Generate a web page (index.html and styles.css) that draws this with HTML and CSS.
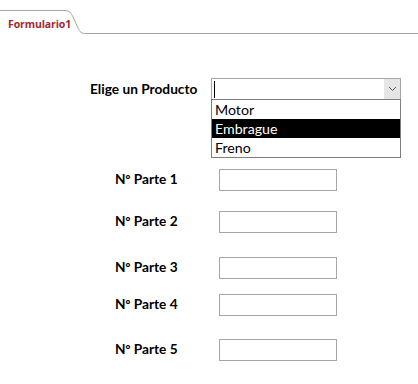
FILE: index.html
```html
<!DOCTYPE html>
<html lang="es">
<head>
    <meta charset="UTF-8">
    <title>Formulario1</title>
    <link rel="stylesheet" href="styles.css">
</head>
<body>
    <div class="tabbar">
        <svg class="tab-line" width="418" height="34" viewBox="0 0 418 34">
            <path d="M0 10.5 H64 C70 10.5 71 13 73 17 L78 28 C80 32 81 33.5 86 33.5 H418" fill="none" stroke="#a3a3a3" stroke-width="1"/>
        </svg>
        <div class="tab">Formulario1</div>
    </div>

    <div class="form">
        <div class="row row-combo">
            <label class="lbl lbl-product">Elige un Producto</label>
            <div class="combo">
                <span class="caret"></span>
                <span class="combo-btn">
                    <svg width="9" height="6" viewBox="0 0 9 6">
                        <path d="M1 1 L4.5 4.5 L8 1" fill="none" stroke="#555" stroke-width="1"/>
                    </svg>
                </span>
                <ul class="dropdown">
                    <li>Motor</li>
                    <li class="selected">Embrague</li>
                    <li>Freno</li>
                </ul>
            </div>
        </div>

        <div class="row part p1">
            <label class="lbl">N<span class="ord">º</span> Parte 1</label>
            <input type="text" class="field">
        </div>
        <div class="row part p2">
            <label class="lbl">N<span class="ord">º</span> Parte 2</label>
            <input type="text" class="field">
        </div>
        <div class="row part p3">
            <label class="lbl">N<span class="ord">º</span> Parte 3</label>
            <input type="text" class="field">
        </div>
        <div class="row part p4">
            <label class="lbl">N<span class="ord">º</span> Parte 4</label>
            <input type="text" class="field">
        </div>
        <div class="row part p5">
            <label class="lbl">N<span class="ord">º</span> Parte 5</label>
            <input type="text" class="field">
        </div>
    </div>
</body>
</html>
```

FILE: styles.css
```css
body {
    margin: 0;
    background: #ffffff;
    font-family: Lato, "Open Sans", sans-serif;
    color: #000;
}

/* pestaña del formulario */
.tabbar {
    position: relative;
    height: 34px;
}
.tab-line {
    position: absolute;
    top: 0;
    left: 0;
}
.tab {
    position: relative;
    padding: 17px 0 0 8px;
    font-family: "Open Sans", sans-serif;
    font-size: 10.5px;
    font-weight: bold;
    color: #a4262c;
    letter-spacing: -0.1px;
}

.form {
    display: flex;
    flex-direction: column;
}
.row {
    display: flex;
    align-items: center;
    height: 22px;
}
.lbl {
    font-size: 13.7px;
    font-weight: bold;
    flex-shrink: 0;
}
.ord {
    font-family: "Open Sans", sans-serif;
    font-size: 12.5px;
}

/* combo de producto */
.row-combo {
    margin-top: 44px;
    padding-left: 90px;
}
.lbl-product {
    width: 121px;
    margin-top: -2px;
}
.combo {
    position: relative;
    box-sizing: border-box;
    width: 190px;
    height: 22px;
    border: 1px solid #a6a6a6;
    display: flex;
    align-items: center;
    justify-content: space-between;
}
.caret {
    width: 1px;
    height: 17px;
    margin-left: 2px;
    background: #000;
}
.combo-btn {
    width: 16px;
    height: 20px;
    background: #e6e6e6;
    display: flex;
    align-items: center;
    justify-content: center;
}
.dropdown {
    position: absolute;
    top: 20px;
    left: -1px;
    width: 190px;
    box-sizing: border-box;
    margin: 0;
    padding: 0;
    list-style: none;
    border: 1px solid #7f7f7f;
    background: #fff;
}
.dropdown li {
    height: 19px;
    line-height: 19px;
    padding-left: 3px;
    font-size: 14.2px;
}
.dropdown li.selected {
    background: #000;
    color: #fff;
}

/* campos de número de parte */
.part {
    padding-left: 115px;
}
.part .lbl {
    width: 104px;
    margin-top: -3px;
}
.field {
    box-sizing: border-box;
    width: 118px;
    height: 22px;
    margin: 0;
    border: 1px solid #a6a6a6;
    padding: 0;
}
.p1 { margin-top: 69px; }
.p2 { margin-top: 20px; }
.p3 { margin-top: 24px; }
.p4 { margin-top: 15px; }
.p5 { margin-top: 23px; }
```
